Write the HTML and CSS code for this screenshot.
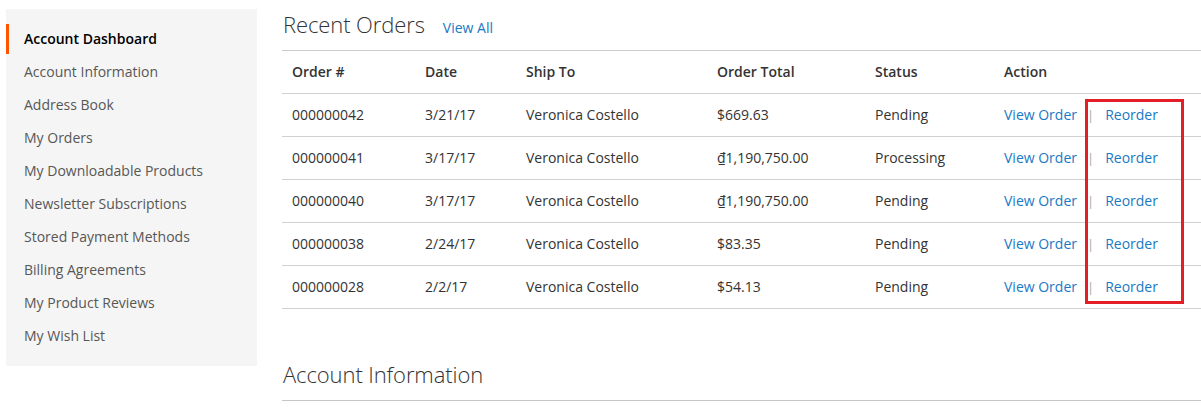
FILE: index.html
```html
<!DOCTYPE html>
<html>
<head>
<meta charset="utf-8">
<link rel="stylesheet" href="styles.css">
</head>
<body>
<div class="page">
  <aside class="sidebar">
    <ul class="nav">
      <li class="nav-item active">Account Dashboard</li>
      <li class="nav-item">Account Information</li>
      <li class="nav-item">Address Book</li>
      <li class="nav-item">My Orders</li>
      <li class="nav-item">My Downloadable Products</li>
      <li class="nav-item">Newsletter Subscriptions</li>
      <li class="nav-item">Stored Payment Methods</li>
      <li class="nav-item">Billing Agreements</li>
      <li class="nav-item">My Product Reviews</li>
      <li class="nav-item">My Wish List</li>
    </ul>
  </aside>
  <main class="main">
    <div class="block-title">
      <strong class="title-text">Recent Orders</strong>
      <a class="link view-all">View All</a>
    </div>
    <div class="table-wrap">
      <table class="orders">
        <colgroup>
          <col class="c1"><col class="c2"><col class="c3"><col class="c4"><col class="c5"><col class="c6">
        </colgroup>
        <thead>
          <tr><th>Order #</th><th>Date</th><th>Ship To</th><th>Order Total</th><th>Status</th><th>Action</th></tr>
        </thead>
        <tbody>
          <tr><td>000000042</td><td>3/21/17</td><td>Veronica Costello</td><td>$669.63</td><td>Pending</td><td class="actions"><a class="link">View Order</a><span class="sep">|</span><a class="link">Reorder</a></td></tr>
          <tr><td>000000041</td><td>3/17/17</td><td>Veronica Costello</td><td>₫1,190,750.00</td><td>Processing</td><td class="actions"><a class="link">View Order</a><span class="sep">|</span><a class="link">Reorder</a></td></tr>
          <tr><td>000000040</td><td>3/17/17</td><td>Veronica Costello</td><td>₫1,190,750.00</td><td>Pending</td><td class="actions"><a class="link">View Order</a><span class="sep">|</span><a class="link">Reorder</a></td></tr>
          <tr><td>000000038</td><td>2/24/17</td><td>Veronica Costello</td><td>$83.35</td><td>Pending</td><td class="actions"><a class="link">View Order</a><span class="sep">|</span><a class="link">Reorder</a></td></tr>
          <tr><td>000000028</td><td>2/2/17</td><td>Veronica Costello</td><td>$54.13</td><td>Pending</td><td class="actions"><a class="link">View Order</a><span class="sep">|</span><a class="link">Reorder</a></td></tr>
        </tbody>
      </table>
      <div class="highlight"></div>
    </div>
    <div class="block-title second">
      <strong class="title-text">Account Information</strong>
    </div>
  </main>
</div>
</body>
</html>
```
FILE: styles.css
```css
* { box-sizing: border-box; }
html, body { margin: 0; padding: 0; background: #fff; }
body {
  font-family: "Open Sans", "Liberation Sans", sans-serif;
  font-size: 14px;
  color: #333;
  overflow: hidden;
}
.page {
  display: flex;
  align-items: flex-start;
  padding: 9px 0 0 6px;
  gap: 25px;
}
.sidebar {
  width: 251px;
  flex: 0 0 251px;
  background: #f5f5f5;
  padding: 15px 0;
}
.nav {
  list-style: none;
  margin: 0;
  padding: 0;
  display: flex;
  flex-direction: column;
  gap: 3px;
}
.nav-item {
  height: 30px;
  line-height: 30px;
  padding-left: 15px;
  border-left: 3px solid transparent;
  color: #575757;
  white-space: nowrap;
}
.nav-item.active {
  border-left-color: #ff5501;
  color: #000;
  font-weight: 600;
}
.main {
  flex: 1;
  min-width: 0;
}
.block-title {
  display: flex;
  align-items: baseline;
  height: 41px;
  padding-left: 1px;
  margin-top: -1px;
  padding-bottom: 1px;
}
.title-text {
  font-size: 22px;
  font-weight: 300;
  line-height: 32px;
  color: #333;
  letter-spacing: -0.1px;
}
.view-all {
  margin-left: 18px;
  font-size: 14px;
}
.link { color: #1979c3; text-decoration: none; }
.table-wrap { position: relative; margin-top: 1px; }
.orders {
  width: 100%;
  border-collapse: collapse;
  table-layout: fixed;
  border-top: 1px solid #ccc;
}
.c1 { width: 133px; }
.c2 { width: 101px; }
.c3 { width: 191px; }
.c4 { width: 158px; }
.c5 { width: 129px; }
.orders th, .orders td {
  text-align: left;
  padding: 0 10px 2px;
  height: 43px;
  vertical-align: middle;
  white-space: nowrap;
}
.orders th {
  font-weight: 600;
  border-bottom: 1px solid #d1d1d1;
}
.orders td { border-bottom: 1px solid #d1d1d1; }
.sep {
  color: #a6a6a6;
  margin: 0 11px 0 10px;
  font-size: 13px;
}
.highlight {
  position: absolute;
  left: 803px;
  top: 49px;
  width: 99px;
  height: 205px;
  border: 3px solid #e41e26;
}
.block-title.second {
  margin-top: 49px;
  height: 43px;
  border-bottom: 1px solid #c6c6c6;
}
```
